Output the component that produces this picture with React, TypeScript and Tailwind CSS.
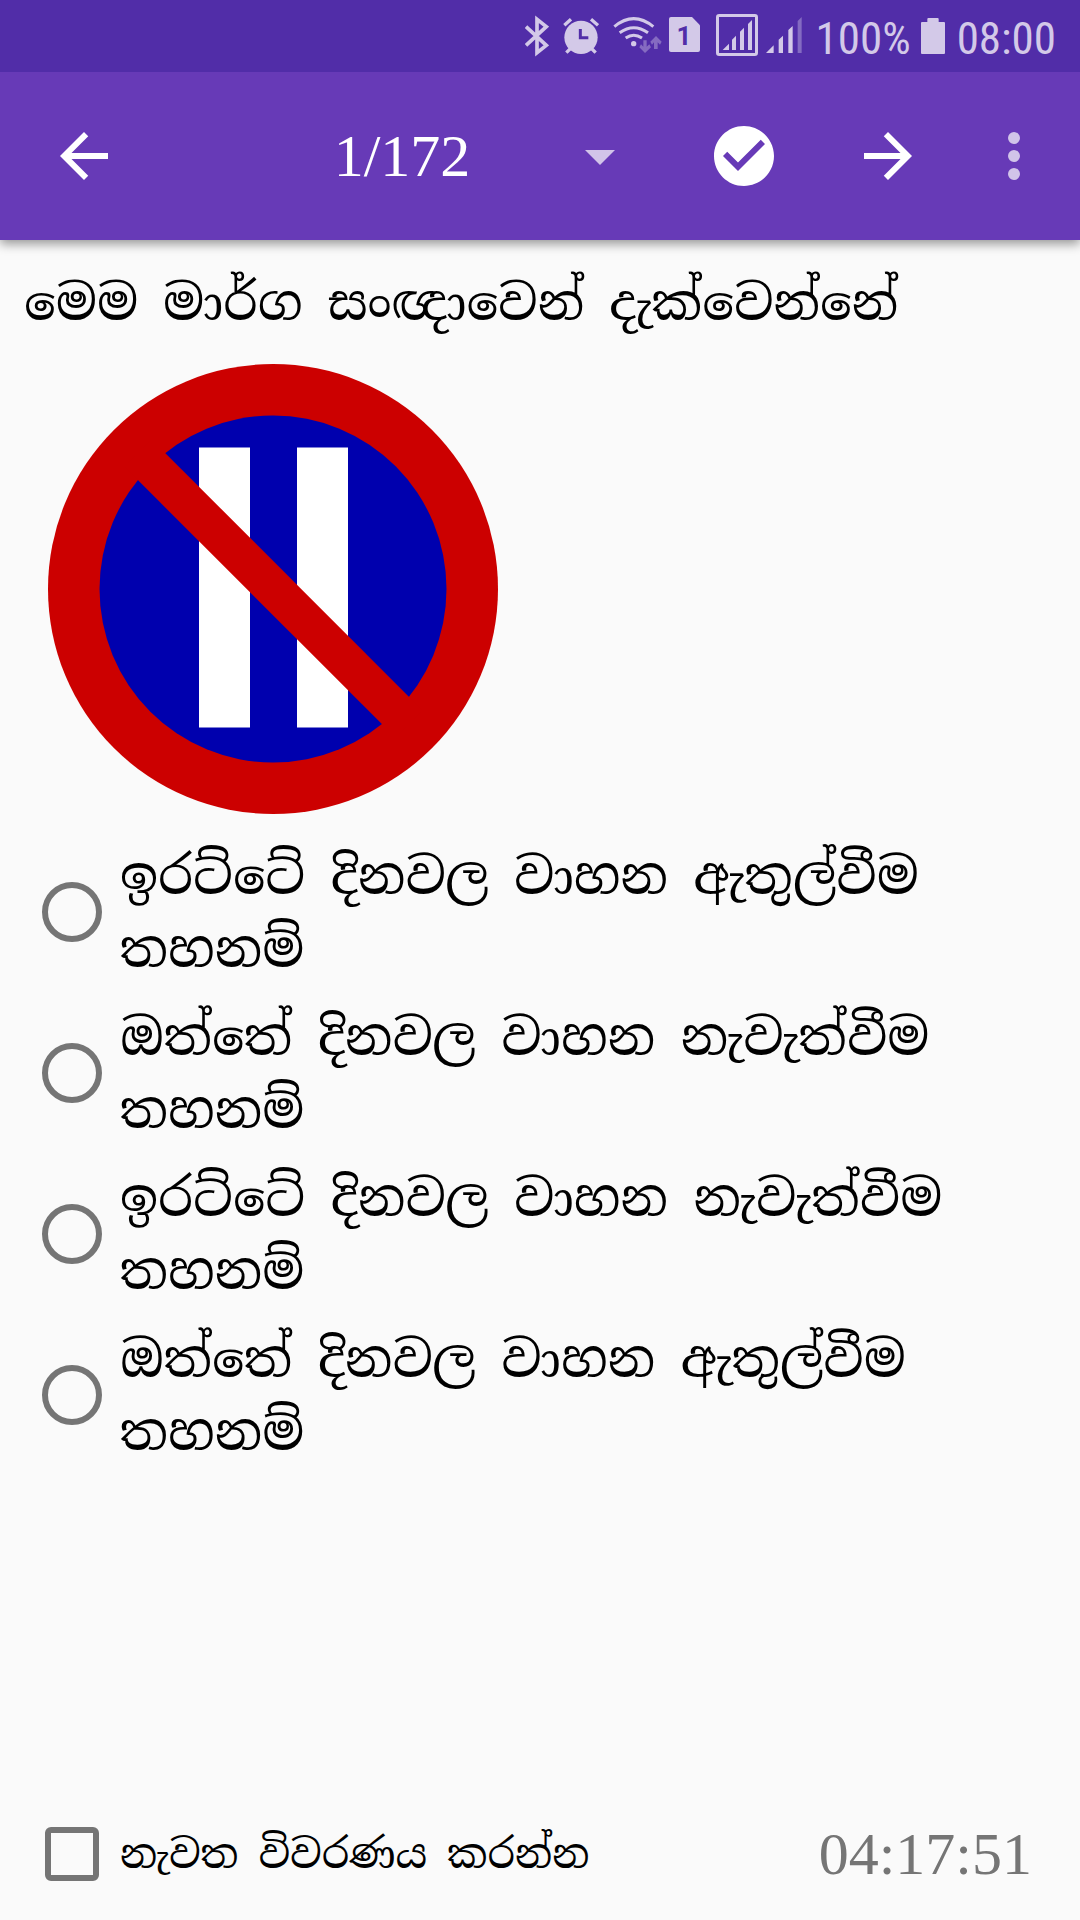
import React, { useState } from "react";

const options = [
  "ඉරට්ටේ දිනවල වාහන ඇතුල්වීම තහනම්",
  "ඔත්තේ දිනවල වාහන නැවැත්වීම තහනම්",
  "ඉරට්ටේ දිනවල වාහන නැවැත්වීම තහනම්",
  "ඔත්තේ දිනවල වාහන ඇතුල්වීම තහනම්",
];

function StatusBar() {
  return (
    <div className="relative z-20 flex h-[72px] items-center justify-end bg-[#512da8] pr-6 font-['Roboto_Condensed','Roboto',sans-serif] text-[45px] text-[#d3c9e8]">
      <svg className="h-[72px] w-6" viewBox="48 0 72 216" fill="none" stroke="currentColor" strokeWidth="11" aria-label="Bluetooth">
        <path d="M51 80 112 136 84 158V58L112 80 51 136" />
      </svg>
      <svg className="ml-3.5 h-[72px] w-9" viewBox="162 0 108 216" aria-label="Alarm">
        <circle cx="216" cy="112" r="50" fill="currentColor" />
        <g fill="none" stroke="currentColor" strokeWidth="10">
          <path d="M166 76 186 58M246 58 267 76M186 144 172 158M246 144 260 158" />
        </g>
        <path d="M214 87V113H238" fill="none" stroke="#512da8" strokeWidth="9" />
      </svg>
      <svg className="ml-3.5 h-[72px] w-[50px]" viewBox="311 0 150 216" aria-label="Wi-Fi">
        <g fill="none" stroke="currentColor" strokeWidth="9">
          <path d="M315 80Q373 32 432 80M331 98Q373 68 416 98M349 114Q373 97 398 114" />
        </g>
        <circle cx="373" cy="131" r="8" fill="currentColor" />
        <g fill="currentColor" opacity=".4">
          <path d="M402 121H412V140L420 133 425 142 407 159 390 142 395 133 402 140Z" />
          <path d="M434 147H445V127L452 134 457 125 440 108 423 125 428 134 434 127Z" />
        </g>
      </svg>
      <svg className="ml-1.5 h-[72px] w-[31px]" viewBox="477 0 93 216" aria-label="SIM 1">
        <path d="M483 51H546L570 76V150Q570 156 564 156H483Q477 156 477 150V57Q477 51 483 51Z" fill="currentColor" />
        <text x="522" y="136" textAnchor="middle" fontSize="78" fontWeight="700" fontFamily="Roboto" fill="#512da8">1</text>
      </svg>
      <svg className="ml-4 h-[72px] w-[42px]" viewBox="618 0 126 216" aria-label="Signal">
        <rect x="622.5" y="46.500" width="117" height="117" rx="5" fill="none" stroke="currentColor" strokeWidth="9" />
        <path d="M638 150 657 131V150ZM666 150V119L678 107V150ZM690 150V95L702 83V150ZM714 150V72L726 60V150Z" fill="currentColor" />
      </svg>
      <svg className="ml-2 h-[72px] w-9" viewBox="766 0 108 216" aria-label="Signal 2">
        <path d="M766 159 789 136V159ZM804 159V119L817 107V159ZM833 159V90L846 78V159Z" fill="currentColor" />
        <path d="M861 159V63L873 51V159Z" fill="currentColor" opacity=".4" />
      </svg>
      <span className="ml-3.5 pt-1 leading-none">100%</span>
      <svg className="ml-2.5 h-[72px] w-6" viewBox="423 0 72 216" aria-label="Battery full">
        <path d="M442 57Q442 54 445 54H473Q476 54 476 57V66H492Q495 66 495 69V159Q495 162 492 162H426Q423 162 423 159V69Q423 66 426 66H442Z" fill="currentColor" />
      </svg>
      <span className="ml-3 pt-1 leading-none">08:00</span>
    </div>
  );
}

function Icon({ d, className = "" }: { d: string; className?: string }) {
  return (
    <svg viewBox="0 0 24 24" className={`size-[72px] ${className}`} fill="currentColor" aria-hidden="true">
      <path d={d} />
    </svg>
  );
}

function AppBar() {
  return (
    <header className="relative z-10 flex h-[168px] items-center bg-[#673ab7] pr-3 text-white shadow-[0_4px_10px_rgba(0,0,0,0.4)]">
      <button aria-label="Previous" className="flex w-[168px] justify-center">
        <Icon d="M20 11H7.830l5.590-5.590L12 4l-8 8 8 8 1.410-1.410L7.830 13H20v-2z" />
      </button>
      <div className="relative flex-1">
        <select
          aria-label="Question"
          className="h-[120px] w-full appearance-none bg-transparent pr-9 text-center font-['Liberation_Serif',serif] text-[60px] leading-none [text-align-last:center]"
        >
          <option>1/172</option>
        </select>
        <Icon className="pointer-events-none absolute top-6 right-9 opacity-70" d="M7 10l5 5 5-5z" />
      </div>
      <button aria-label="Check answer" className="flex w-36 justify-center">
        <Icon d="M12 2C6.480 2 2 6.480 2 12s4.480 10 10 10 10-4.480 10-10S17.520 2 12 2zm-2 15l-5-5 1.410-1.410L10 14.170l7.590-7.590L19 8l-9 9z" />
      </button>
      <button aria-label="Next" className="flex w-36 justify-center">
        <Icon d="M12 4l-1.410 1.410L16.170 11H4v2h12.170l-5.580 5.590L12 20l8-8z" />
      </button>
      <button aria-label="More" className="flex w-[108px] justify-center">
        <Icon className="opacity-70" d="M12 8a2 2 0 1 0 0-4 2 2 0 0 0 0 4zm0 2a2 2 0 1 0 0 4 2 2 0 0 0 0-4zm0 6a2 2 0 1 0 0 4 2 2 0 0 0 0-4z" />
      </button>
    </header>
  );
}

function RoadSign() {
  return (
    <svg viewBox="0 0 450 450" className="ml-12 size-[450px]" role="img" aria-label="Road sign">
      <circle cx="225" cy="225" r="225" fill="#c00" />
      <circle cx="225" cy="225" r="173.500" fill="#0000ae" />
      <path d="M151 83.500h51v280h-51zM249 83.500h51v280h-51z" fill="#fff" />
      <path d="M90 89 361 360" stroke="#c00" strokeWidth="38.500" />
    </svg>
  );
}

export default function App() {
  const [picked, setPicked] = useState<number | null>(null);
  return (
    <div className="flex min-h-screen flex-col bg-[#fafafa] font-['Noto_Serif_Sinhala','Noto_Sans_Sinhala',serif] text-black">
      <StatusBar />
      <AppBar />
      <main className="flex flex-1 flex-col">
        <h1 className="px-6 pt-[26px] pb-[25px] text-[50px] leading-[73px]">මෙම මාර්ග සංඥාවෙන් දැක්වෙන්නේ</h1>
        <RoadSign />
        <div role="radiogroup" aria-label="Answers" className="mt-[18px] flex flex-col">
          {options.map((text, i) => (
            <label key={i} className="flex items-center gap-[18px] pt-[7px] pb-2 pl-[42px] text-[51px] leading-[73px]">
              <input
                type="radio"
                name="answer"
                checked={picked === i}
                onChange={() => setPicked(i)}
                className="size-[60px] shrink-0 appearance-none rounded-full border-[6px] border-[#757575] checked:bg-[#673ab7]"
              />
              <span className="max-w-[850px]">{text}</span>
            </label>
          ))}
        </div>
      </main>
      <footer className="flex items-center justify-between pr-12 pb-[30px] pl-[45px]">
        <label className="flex items-center gap-[21px] text-[40px] leading-[72px]">
          <input type="checkbox" className="size-[54px] appearance-none rounded-md border-[6px] border-[#757575] checked:bg-[#673ab7]" />
          <span>නැවත විවරණය කරන්න</span>
        </label>
        <time className="font-['Liberation_Serif',serif] text-[60px] leading-[72px] text-[#757575]">04:17:51</time>
      </footer>
    </div>
  );
}
